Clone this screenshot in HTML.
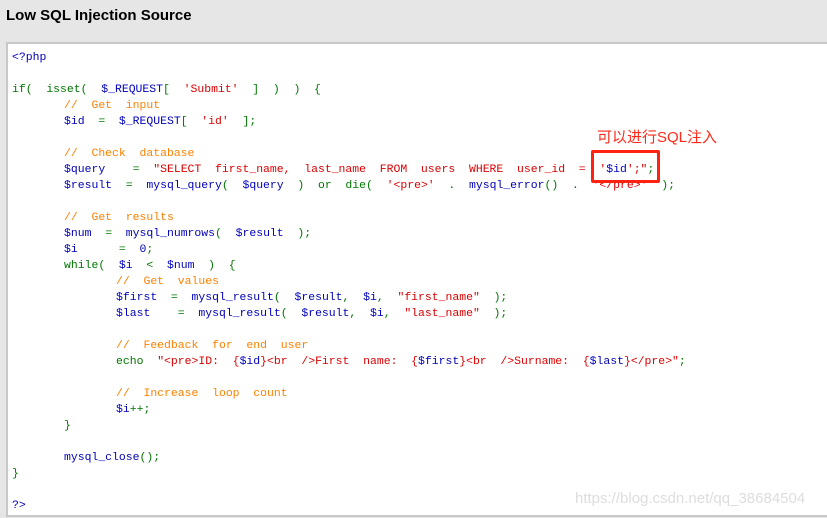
<!DOCTYPE html>
<html><head><meta charset="utf-8"><style>
body{margin:0;width:827px;height:518px;background:#e6e6e6;overflow:hidden;position:relative;font-family:"Liberation Sans",sans-serif}
h1{position:absolute;left:6px;top:7px;margin:0;font-size:15px;font-weight:bold;color:#000}
.box{position:absolute;left:6px;top:42px;width:830px;height:471px;background:#fff;border:2px solid #c8c8c8;border-right:none}
pre{position:absolute;left:4px;top:6px;margin:0;font-family:"Liberation Mono",monospace;font-size:11.45px;line-height:16px;color:#0000BB}
i{display:inline-block;font-style:normal}
.t1{width:52px}.t2{width:104px}
.g{color:#007700}.r{color:#DD0000}.o{color:#FF8000}.b{color:#0000BB}
.ann{position:absolute;left:597px;top:126px;color:#ff2a1a;font-size:15px;font-family:"Liberation Sans","Noto Sans CJK SC",sans-serif}
.rb{position:absolute;left:591px;top:150px;width:63px;height:27px;border:3px solid #f21;border-radius:2px}
.wm{position:absolute;left:575px;top:490px;color:#ddd;font-size:15px;font-family:"Liberation Sans",sans-serif}
</style></head><body>
<h1>Low SQL Injection Source</h1>
<div class="box"><pre><span class="b">&lt;?php</span>

<span class="g">if(  isset(  </span>$_REQUEST<span class="g">[  </span><span class="r">'Submit'</span><span class="g">  ]  )  )  {</span>
<i class="t1"></i><span class="o">//  Get  input</span>
<i class="t1"></i>$id  <span class="g">=  </span>$_REQUEST<span class="g">[  </span><span class="r">'id'</span><span class="g">  ];</span>

<i class="t1"></i><span class="o">//  Check  database</span>
<i class="t1"></i>$query    <span class="g">=  </span><span class="r">"SELECT  first_name,  last_name  FROM  users  WHERE  user_id  =  '</span>$id<span class="r">';"</span><span class="g">;</span>
<i class="t1"></i>$result  <span class="g">=  </span>mysql_query<span class="g">(  </span>$query  <span class="g">)  or  die(  </span><span class="r">'&lt;pre&gt;'</span>  <span class="g">.  </span>mysql_error<span class="g">()  .  </span><span class="r">'&lt;/pre&gt;'</span>  <span class="g">);</span>

<i class="t1"></i><span class="o">//  Get  results</span>
<i class="t1"></i>$num  <span class="g">=  </span>mysql_numrows<span class="g">(  </span>$result  <span class="g">);</span>
<i class="t1"></i>$i      <span class="g">=  </span>0<span class="g">;</span>
<i class="t1"></i><span class="g">while(  </span>$i  <span class="g">&lt;  </span>$num  <span class="g">)  {</span>
<i class="t2"></i><span class="o">//  Get  values</span>
<i class="t2"></i>$first  <span class="g">=  </span>mysql_result<span class="g">(  </span>$result<span class="g">,  </span>$i<span class="g">,  </span><span class="r">"first_name"</span>  <span class="g">);</span>
<i class="t2"></i>$last    <span class="g">=  </span>mysql_result<span class="g">(  </span>$result<span class="g">,  </span>$i<span class="g">,  </span><span class="r">"last_name"</span>  <span class="g">);</span>

<i class="t2"></i><span class="o">//  Feedback  for  end  user</span>
<i class="t2"></i><span class="g">echo  </span><span class="r">"&lt;pre&gt;ID:  {</span>$id<span class="r">}&lt;br  /&gt;First  name:  {</span>$first<span class="r">}&lt;br  /&gt;Surname:  {</span>$last<span class="r">}&lt;/pre&gt;"</span><span class="g">;</span>

<i class="t2"></i><span class="o">//  Increase  loop  count</span>
<i class="t2"></i>$i<span class="g">++;</span>
<i class="t1"></i><span class="g">}</span>

<i class="t1"></i>mysql_close<span class="g">();</span>
<span class="g">}</span>

<span class="b">?&gt;</span></pre></div>
<div class="ann">可以进行SQL注入</div>
<div class="rb"></div>
<div class="wm">https://blog.csdn.net/qq_38684504</div>
</body></html>
